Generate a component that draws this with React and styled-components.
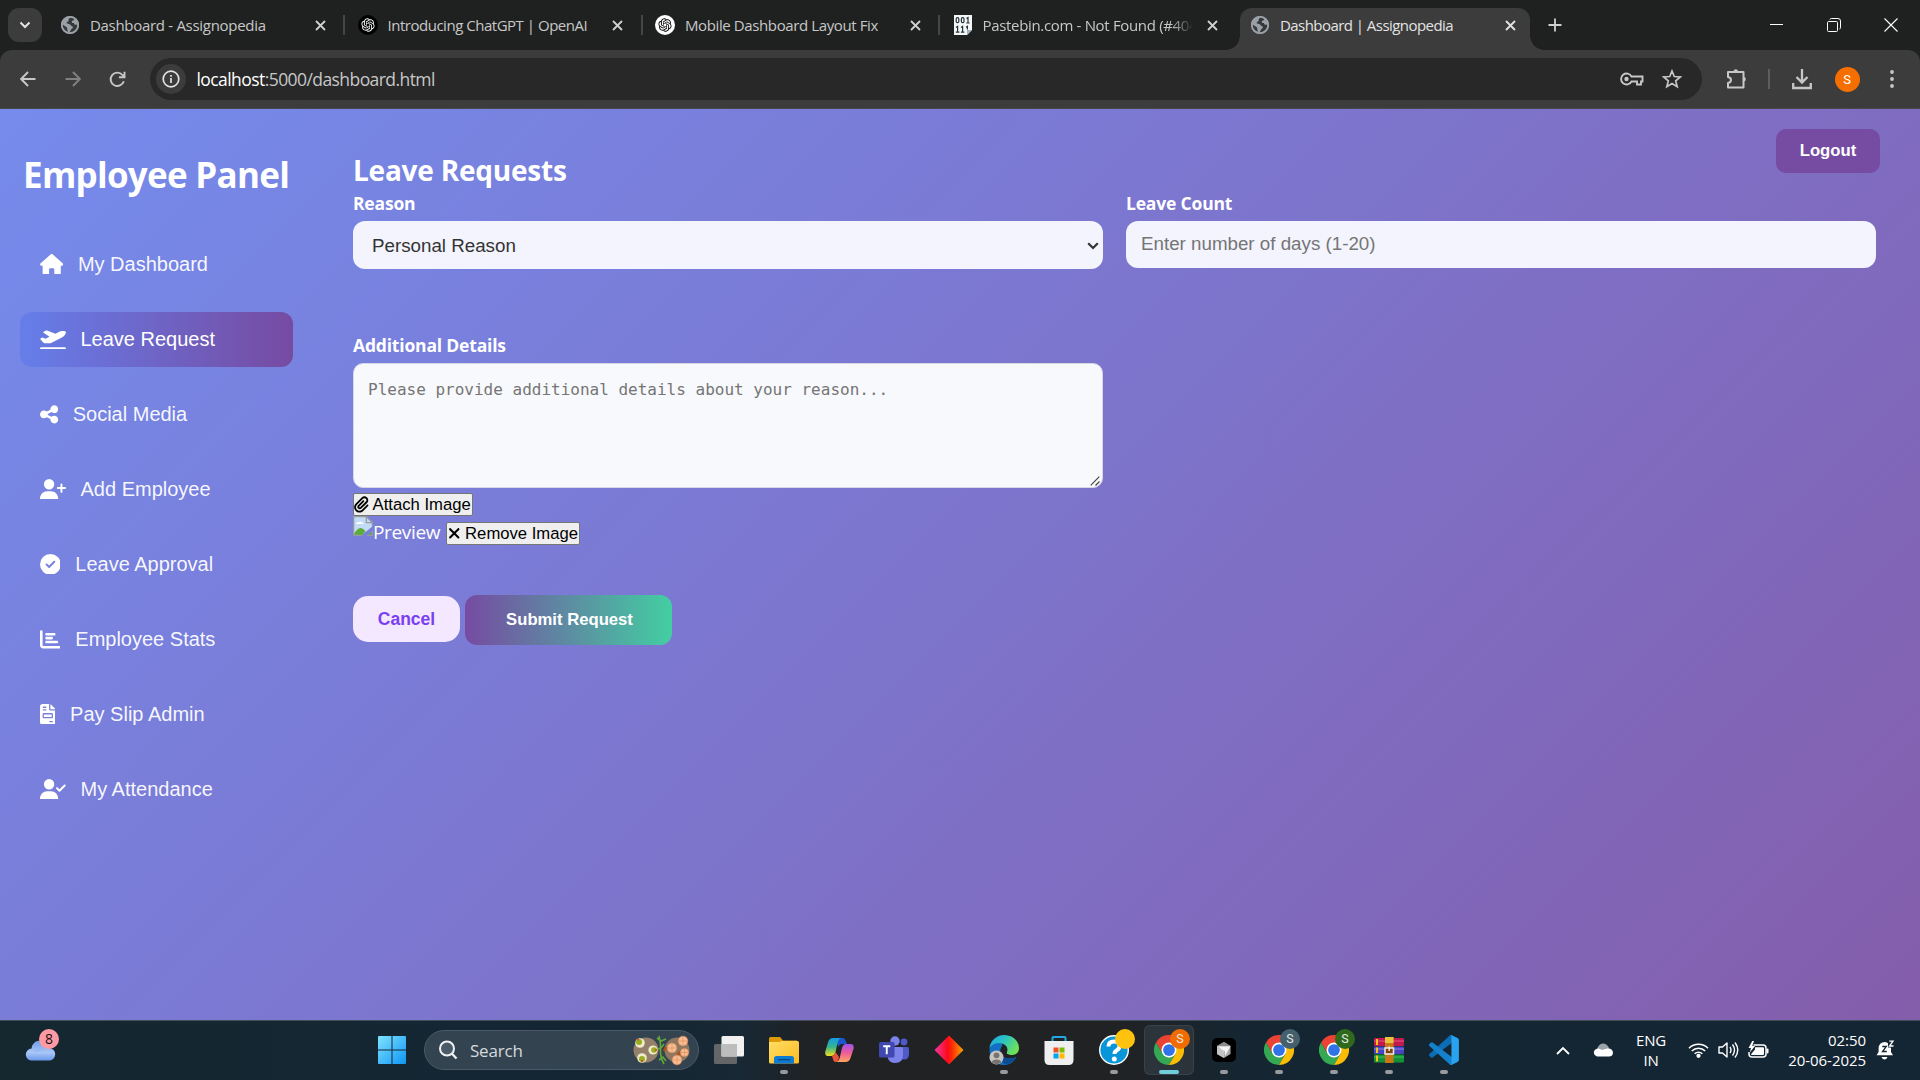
import React from "react";
import styled, { createGlobalStyle, css } from "styled-components";
import {
  FaHouse,
  FaPlaneDeparture,
  FaShareNodes,
  FaUserPlus,
  FaCircleCheck,
  FaChartBar,
  FaFileInvoice,
  FaUserCheck,
  FaPaperclip,
  FaXmark,
} from "react-icons/fa6";
import { RiOpenaiFill } from "react-icons/ri";

const ui = `"Open Sans", "Noto Sans", sans-serif`;
const arial = `"Liberation Sans", Arial, sans-serif`;

const GlobalStyle = createGlobalStyle`
  *, *::before, *::after { box-sizing: border-box; }
  html, body { margin: 0; height: 100%; overflow: hidden; }
  body { font-family: ${ui}; background: #1f2020; }
  svg { display: block; flex: none; }
`;

const Screen = styled.div`
  width: 1920px;
  height: 1080px;
  display: flex;
  flex-direction: column;
  overflow: hidden;
`;

/* ---------- browser chrome ---------- */

const TabStrip = styled.div`
  height: 50px;
  background: #1f2120;
  display: flex;
  align-items: flex-end;
  flex: none;
`;

const TabSearch = styled.div`
  width: 34px;
  height: 34px;
  margin: 0 11px 8px 8px;
  border-radius: 11px;
  background: #3c3c3c;
  display: grid;
  place-items: center;
  flex: none;
`;

const Tab = styled.div`
  position: relative;
  width: ${(p) => p.$w || 297.5}px;
  height: 42px;
  display: flex;
  align-items: center;
  padding: 0 ${(p) => (p.$w ? 18 : 19.5)}px 8px 7px;
  flex: none;
  ${(p) =>
    p.$active
      ? css`
          width: 290px;
          padding: 0 10px 8px 10px;
          background: #3c3c3c;
          border-radius: 12px 12px 0 0;
          &::before,
          &::after {
            content: "";
            position: absolute;
            bottom: 0;
            width: 14px;
            height: 14px;
          }
          &::before {
            left: -14px;
            background: radial-gradient(circle at 0 0, transparent 13.5px, #3c3c3c 14px);
          }
          &::after {
            right: -14px;
            background: radial-gradient(circle at 100% 0, transparent 13.5px, #3c3c3c 14px);
          }
        `
      : ""}
`;

const Favicon = styled.div`
  width: 20px;
  height: 20px;
  display: grid;
  place-items: center;
  margin-right: 10px;
  flex: none;
`;

const TabTitle = styled.div`
  flex: 1;
  min-width: 0;
  font-size: 15px;
  line-height: 20px;
  letter-spacing: ${(p) => p.$ls || 0}px;
  white-space: nowrap;
  overflow: hidden;
  color: ${(p) => (p.$active ? "#e3e3e3" : "#c7c7c7")};
  ${(p) => p.$fade && "mask-image: linear-gradient(90deg, #000 188px, transparent 210px);"}
`;

const TabClose = styled.div`
  width: 20px;
  height: 20px;
  display: grid;
  place-items: center;
  flex: none;
`;

const TabDivider = styled.div`
  width: 2px;
  height: 20px;
  margin-left: 13px;
  margin-right: -14px;
  background: #454746;
  flex: none;
`;

const NewTab = styled.div`
  width: 30px;
  height: 42px;
  margin-left: 10px;
  padding-bottom: 8px;
  display: grid;
  place-items: center;
`;

const WindowButtons = styled.div`
  margin-left: auto;
  margin-right: 1px;
  height: 50px;
  display: flex;
`;

const WindowButton = styled.div`
  width: 57px;
  height: 50px;
  display: grid;
  place-items: center;
`;

const ToolbarWrap = styled.div`
  height: 59px;
  background: #1f2120;
  flex: none;
`;

const Toolbar = styled.div`
  height: 59px;
  background: #3c3c3c;
  border-bottom: 1px solid #48484a;
  border-radius: 12px 12px 0 0;
  display: flex;
  align-items: center;
  padding-left: 6px;
`;

const ToolButton = styled.div`
  width: ${(p) => p.$w || 44.5}px;
  height: 42px;
  display: grid;
  place-items: center;
  flex: none;
`;

const AddressBar = styled.div`
  width: 1552px;
  height: 42px;
  margin: 0 24px 0 10px;
  border-radius: 21px;
  background: #282828;
  display: flex;
  align-items: center;
  padding: 0 10px 0 6px;
  flex: none;
`;

const SiteInfo = styled.div`
  width: 30px;
  height: 30px;
  border-radius: 50%;
  background: #3c3c3c;
  display: grid;
  place-items: center;
  margin-right: 11px;
`;

const Url = styled.div`
  flex: 1;
  font-size: 17.5px;
  line-height: 24px;
  letter-spacing: -0.57px;
  color: #c7c7c7;
  span { color: #fff; }
`;

const ToolDivider = styled.div`
  width: 2px;
  height: 20px;
  margin: 0 10px 0 20px;
  background: #5e5e5e;
`;

const Profile = styled.div`
  width: 25px;
  height: 25px;
  border-radius: 50%;
  background: #f56f00;
  color: #fff;
  font: 13px/25px Roboto, sans-serif;
  text-align: center;
`;

/* ---------- web page ---------- */

const Page = styled.div`
  flex: 1;
  min-height: 0;
  display: flex;
  background: linear-gradient(rgba(255, 255, 255, 0.1), rgba(255, 255, 255, 0.1)),
    linear-gradient(135deg, #667eea 0%, #764ba2 100%);
  color: #fff;
`;

const Sidebar = styled.aside`
  width: 313px;
  padding: 40px 20px 0;
  flex: none;
`;

const PanelTitle = styled.h1`
  margin: 0 0 36px 3px;
  font: 700 35px/52px ${ui};
  letter-spacing: -0.72px;
  white-space: nowrap;
`;

const Menu = styled.nav`
  display: flex;
  flex-direction: column;
  gap: 20px;
`;

const MenuItem = styled.a`
  height: 55px;
  display: flex;
  align-items: center;
  gap: 15px;
  padding: 0 20px 1px 19.5px;
  border-radius: 12px;
  font: 20px/24px ${arial};
  color: ${(p) => (p.$active ? "#fff" : "rgba(255,255,255,.95)")};
  background: ${(p) => (p.$active ? "linear-gradient(90deg, #667eea, #764ba2)" : "none")};
  svg {
    height: 20.8px;
    width: ${(p) => p.$iconWidth}px;
    color: #fff;
  }
`;

const Main = styled.main`
  flex: 1;
  padding: 20px 40px 0;
  display: flex;
  flex-direction: column;
`;

const LogoutButton = styled.button`
  align-self: flex-end;
  width: 104px;
  height: 44px;
  border: 0;
  border-radius: 10px;
  background: #764ba2;
  color: #fff;
  font: 700 16.7px/20px ${arial};
  padding: 0;
`;

const Content = styled.section`
  width: 1523px;
  margin-top: -22px;
`;

const Heading = styled.h2`
  margin: 0;
  font: 700 28px/38px ${ui};
  letter-spacing: -0.22px;
`;

const FieldRow = styled.div`
  display: grid;
  grid-template-columns: 750px 750px;
  column-gap: 23px;
  height: 142px;
  align-items: start;
`;

const Field = styled.div`
  display: flex;
  flex-direction: column;
  width: 750px;
`;

const FieldLabel = styled.label`
  font: 700 17.5px/28px ${ui};
  letter-spacing: -0.18px;
  margin-bottom: 4px;
  white-space: nowrap;
`;

const ControlWrap = styled.div`
  position: relative;
  display: flex;
`;

const ControlMark = styled.span`
  position: absolute;
  right: ${(p) => p.$right}px;
  bottom: ${(p) => p.$bottom}px;
  pointer-events: none;
`;

const Select = styled.select`
  width: 750px;
  height: 48px;
  border: 0;
  border-radius: 12px;
  padding: 1px 19px 0;
  background: #f3f4fd;
  color: #333;
  font: 18.75px/24px ${arial};
  appearance: none;
`;

const NumberInput = styled.input`
  width: 750px;
  height: 47px;
  border: 0;
  border-radius: 12px;
  padding: 0 15px 1px;
  background: #f3f4fd;
  font: 18.75px/24px ${arial};
  &::placeholder { color: #757575; }
`;

const Details = styled.textarea`
  width: 750px;
  height: 125px;
  border: 1px solid #d5d7e2;
  border-radius: 10px;
  background: #f8f9fc;
  padding: 15px 15px 15px 14px;
  font: 16px/22px "DejaVu Sans Mono", monospace;
  resize: none;
  display: block;
  &::placeholder { color: #757575; }
`;

const PlainButton = styled.button`
  height: 23px;
  width: ${(p) => p.$w}px;
  display: inline-flex;
  align-items: center;
  padding: 0;
  padding-left: ${(p) => p.$pl || 0}px;
  gap: ${(p) => p.$gap}px;
  border: 1px solid #767676;
  border-radius: 2px;
  background: #efefef;
  color: #000;
  font: 16.67px/20px ${arial};
  white-space: nowrap;
  svg { height: 16.67px; width: ${(p) => p.$iconWidth}px; }
`;

const AttachRow = styled.div`
  display: flex;
  margin-top: 5px;
`;

const PreviewRow = styled.div`
  display: flex;
  align-items: flex-start;
  height: 32px;
  ${PlainButton} { margin-top: 6px; }
`;

const PreviewAlt = styled.span`
  width: 73px;
  padding-top: 3px;
  font: 500 19px/26px ${ui};
  letter-spacing: -0.35px;
`;

const Actions = styled.div`
  display: flex;
  align-items: flex-start;
  gap: 5px;
  margin-top: 47px;
`;

const CancelButton = styled.button`
  width: 107px;
  height: 46px;
  margin: 1px 0 0;
  border: 0;
  border-radius: 15px;
  background: #f3e8ff;
  color: #7b3ff2;
  font: 700 17.5px/20px ${arial};
  padding: 0;
`;

const SubmitButton = styled.button`
  width: 207px;
  height: 50px;
  margin: 0;
  border: 0;
  border-radius: 12px;
  background: linear-gradient(90deg, #764ba2, #43cea2);
  color: #fff;
  font: 700 16.67px/20px ${arial};
  padding: 0 0 1px 2px;
`;

/* ---------- taskbar ---------- */

const Taskbar = styled.footer`
  height: 60px;
  flex: none;
  border-top: 1px solid #42505c;
  padding-bottom: 1px;
  background: linear-gradient(90deg, #152830 0, #142634 600px, #182834 740px, #202224 810px, #202224 1120px, #152632 1240px, #142634 100%);
  display: flex;
  align-items: center;
  color: #fff;
`;

const Weather = styled.div`
  position: relative;
  width: 364.5px;
  height: 58px;
  padding: 19px 0 0 25px;
`;

const CountBadge = styled.div`
  position: absolute;
  left: 39px;
  top: 8px;
  width: 20px;
  height: 20px;
  border-radius: 50%;
  background: #ff99a4;
  color: #111;
  font: 14px/20px ${ui};
  text-align: center;
`;

const TaskSlot = styled.div`
  position: relative;
  width: 50px;
  height: 50px;
  margin: 0 2.5px;
  border-radius: 6px;
  display: grid;
  place-items: center;
  flex: none;
  ${(p) =>
    p.$active &&
    css`
      background: #2b333b;
      box-shadow: inset 0 0 0 1px #39424a;
    `}
  &::after {
    content: "";
    display: ${(p) => (p.$running || p.$active ? "block" : "none")};
    position: absolute;
    bottom: 1px;
    left: ${(p) => (p.$active ? 15 : 21)}px;
    width: ${(p) => (p.$active ? 20 : 8)}px;
    height: 4px;
    border-radius: 2px;
    background: ${(p) => (p.$active ? "#6fd0dc" : "#969b9f")};
  }
`;

const SlotBadge = styled.div`
  position: absolute;
  left: 26px;
  top: 4px;
  width: 20px;
  height: 20px;
  border-radius: 50%;
  background: ${(p) => p.$color};
  color: #e8e8e8;
  font: 12.5px/20px Roboto, sans-serif;
  text-align: center;
`;

const SearchPill = styled.div`
  width: 275px;
  height: 40px;
  margin: 0 2.5px 0 4.5px;
  border-radius: 20px;
  border: 1px solid #4a5965;
  background: #344350;
  display: flex;
  align-items: center;
  padding: 0 6px 0 13px;
  font: 17px/22px ${ui};
  letter-spacing: -0.2px;
  color: #d4dade;
  flex: none;
  span { flex: 1; margin-left: 12px; padding-top: 1px; }
`;

const Tray = styled.div`
  margin-left: auto;
  height: 58px;
  display: flex;
  align-items: center;
`;

const TrayItem = styled.div`
  width: ${(p) => p.$w}px;
  display: grid;
  justify-items: center;
  flex: none;
`;

const TrayText = styled.div`
  width: ${(p) => p.$w}px;
  padding-bottom: 1px;
  text-align: ${(p) => p.$align || "center"};
  font: 15px/20px ${ui};
  letter-spacing: ${(p) => p.$ls || 0}px;
  white-space: pre;
  flex: none;
`;

/* ---------- drawings ---------- */

const Stroke = ({ w = 20, h = w, vb = `0 0 ${w} ${h}`, d, c = "#c7c7c7", sw = 2, ...r }) => (
  <svg width={w} height={h} viewBox={vb} fill="none" stroke={c} strokeWidth={sw} {...r}>
    <path d={d} />
  </svg>
);

const Globe = () => (
  <svg width="18" height="18" viewBox="0 0 18 18">
    <circle cx="9" cy="9" r="9" fill="#9aa0a6" />
    <path
      fill="#303335"
      d="M10 1.8 C8.5 2 7.4 3 7.6 4.4 C7.8 5.6 6 5.4 5.6 6.8 C5.4 8.2 7.4 8 8.6 8.3 C10 8.7 9.6 10 11 10.2 C12.6 10.5 12 12.2 10.8 12.8 C9.8 13.4 9.8 15 8.4 16.3 L6.8 16 C7 14.4 6 13.6 6.2 12.2 C6.3 11 3.6 10.4 1.7 8.6 C1.5 12.5 4.5 16.5 9 16.4 C13.3 16.2 16.4 13 16.4 9 L15.2 8.4 C13.6 9.2 12.8 8 13 7 C11.4 7.4 10.6 6.6 10.8 5.4 C11 4.2 13 4.6 13.4 3.2 C12.4 2.2 11.2 1.8 10 1.8 Z"
      opacity=".95"
    />
    <circle cx="9" cy="9" r="8.2" fill="none" stroke="#9aa0a6" strokeWidth="1.7" />
  </svg>
);

const GptBadge = styled.span`
  width: 20px;
  height: 20px;
  border-radius: 50%;
  display: grid;
  place-items: center;
  background: ${(p) => p.$bg};
  color: ${(p) => p.$fg};
  font-size: 16px;
`;

const GptMark = ({ bg, fg }) => (
  <GptBadge $bg={bg} $fg={fg}>
    <RiOpenaiFill />
  </GptBadge>
);

const PasteMark = () => (
  <svg width="18" height="20" viewBox="0 0 18 20">
    <path d="M0 0H18V15L13 20H0Z" fill="#f4f6f7" />
    <path d="M13 20V15H18Z" fill="#9fb0bb" />
    <g fill="none" stroke="#26323a" strokeWidth="1.2">
      <rect x="2.2" y="2.7" width="2.6" height="5" rx="1.2" />
      <rect x="7.4" y="2.7" width="2.6" height="5" rx="1.2" />
      <path d="M12.5 3.6 L14 2.6V8 M12.3 8H15.6 M2 12.6 L3.6 11.5V17 M1.8 17.2H5.4 M7 12.6 L8.6 11.5V17 M6.9 17.2H10.4 M12 12.2L13.4 11.4V14.5" />
    </g>
  </svg>
);

const CloseX = ({ c = "#d0d0d0" }) => <Stroke w={11} d="M1 1L10 10M10 1L1 10" c={c} sw={1.8} />;

const ChromeLogo = () => (
  <svg width="30" height="30" viewBox="0 0 48 48">
    <path fill="#ea4335" d="M24 12H44.8A24 24 0 0 0 3.2 12L13.6 30Z" />
    <path fill="#34a853" d="M13.6 30L3.2 12A24 24 0 0 0 24 48L34.4 30Z" />
    <path fill="#fbbc04" d="M34.4 30L24 48A24 24 0 0 0 44.8 12H24Z" />
    <circle cx="24" cy="24" r="12" fill="#fff" />
    <circle cx="24" cy="24" r="9.4" fill="#2f73e8" />
  </svg>
);

const WindowsLogo = () => (
  <svg width="30" height="30" viewBox="0 0 30 30">
    <defs>
      <linearGradient id="win" x1="0" y1="0" x2="1" y2="1">
        <stop offset="0" stopColor="#7fe3ff" />
        <stop offset="1" stopColor="#0f95f5" />
      </linearGradient>
    </defs>
    <path fill="url(#win)" d="M2 1H14.5V14.5H1V2Q1 1 2 1ZM15.5 1H28Q29 1 29 2V14.5H15.5ZM1 15.5H14.5V29H2Q1 29 1 28ZM15.5 15.5H29V28Q29 29 28 29H15.5Z" />
  </svg>
);

const WeatherCloud = () => (
  <svg width="32" height="21" viewBox="0 0 32 21">
    <defs>
      <linearGradient id="wc" x1="0" y1="0" x2="0" y2="1">
        <stop offset="0" stopColor="#6f9be8" />
        <stop offset=".6" stopColor="#a9c6f7" />
        <stop offset="1" stopColor="#6b9aea" />
      </linearGradient>
    </defs>
    <path fill="url(#wc)" d="M7 20.5a6 6 0 0 1-.4-12C7 4 10.500 .5 15.500 .5c4.500 0 8 3 8.700 7.500A6.300 6.300 0 0 1 25 20.500Z" />
    <path fill="#8fb4f2" opacity=".6" d="M9 12c2-3 6-4 9-2-4 0-6 2-9 2Z" />
  </svg>
);

const FoodPlates = () => (
  <svg width="60" height="40" viewBox="0 0 60 40">
    <circle cx="14" cy="20" r="12.500" fill="#94806a" />
    <circle cx="45" cy="20" r="12.500" fill="#8d785f" />
    <g fill="#eceacb">
      <circle cx="8" cy="13" r="4.800" />
      <circle cx="21" cy="20" r="4.600" />
      <circle cx="10" cy="28" r="4.800" />
    </g>
    <g fill="#9aac22">
      <circle cx="7" cy="12" r="3" />
      <circle cx="22" cy="20" r="2.800" />
      <circle cx="10" cy="29" r="3" />
    </g>
    <g fill="#d8432b">
      <circle cx="6" cy="9.500" r="1" />
      <circle cx="24" cy="20" r="1" />
      <circle cx="10" cy="31" r="1" />
    </g>
    <path d="M27 6Q29 13 28.500 20T32 34M25 8L29 11L34 9M26 19L29 18L32 14M27 30L31 27L34 31" stroke="#5fa83a" strokeWidth="1.600" fill="none" />
    <path d="M34 17l-2 4M48 22l-3 5" stroke="#b04f1a" strokeWidth="2.500" />
    <g fill="#f7bd93" stroke="#e08a55" strokeWidth=".6">
      <circle cx="40" cy="18" r="4.800" />
      <circle cx="51" cy="11" r="4.800" />
      <circle cx="45" cy="30" r="4.800" />
      <circle cx="52.500" cy="22.500" r="4" />
      <path d="M36 18H44M40 14V22M47 11H55M51 7V15M41 30H49M45 26V34M49 22.500H56M52.500 19V26" fill="none" />
    </g>
  </svg>
);

const TaskView = () => (
  <svg width="30" height="28" viewBox="0 0 30 28">
    <rect x="0" y="8" width="23" height="20" rx="1.500" fill="#646566" />
    <rect x="7.500" y="0" width="22.500" height="20.500" rx="1.500" fill="#f1f1f1" />
    <rect x="7.500" y="8" width="15.500" height="12.500" fill="#bdbdbd" />
  </svg>
);

const Explorer = () => (
  <svg width="30" height="28" viewBox="0 0 30 28">
    <defs>
      <linearGradient id="fold" x1="0" y1="0" x2="1" y2="1">
        <stop offset="0" stopColor="#ffdd66" />
        <stop offset="1" stopColor="#fcbc20" />
      </linearGradient>
    </defs>
    <path fill="#dd9a06" d="M1.500 1H11L14 4.500H28V10H0V2.500Q0 1 1.500 1Z" />
    <path fill="url(#fold)" d="M0 6H10L13 5H28.500Q30 5 30 6.500V26Q30 27.500 28.500 27.500H1.500Q0 27.500 0 26Z" />
    <path fill="#0f7bd0" d="M5 27.500V22.500Q5 20 7.500 20H22.500Q25 20 25 22.500V27.500Z" />
    <path stroke="#064a86" strokeWidth="1.300" d="M9 23.700H21" />
  </svg>
);

const Copilot = () => (
  <svg width="29" height="26" viewBox="0 0 29 26">
    <defs>
      <linearGradient id="cpa" x1="0" y1="0" x2="0" y2="1">
        <stop offset="0" stopColor="#159be8" />
        <stop offset=".5" stopColor="#35b58c" />
        <stop offset="1" stopColor="#f4dc1c" />
      </linearGradient>
      <linearGradient id="cpb" x1="0" y1="0" x2="0" y2="1">
        <stop offset="0" stopColor="#a052ee" />
        <stop offset=".5" stopColor="#ee5c97" />
        <stop offset="1" stopColor="#ffa65a" />
      </linearGradient>
    </defs>
    <path fill="#1b56cc" d="M10 1H18Q20 1 20.800 4L22 7H17Q14.500 7 13.600 10Z" />
    <path fill="url(#cpa)" d="M8 1H16Q13.500 2 12.800 5L10.500 15Q9.500 19 6 19H3.500Q-.5 19 .3 14.500L3.300 4.500Q4.500 1 8 1Z" />
    <path fill="#e9563d" d="M7 19Q9.800 18.600 10.500 15L14 20Q13.500 25 10.500 25Q8.500 25 8 22Z" />
    <path fill="url(#cpb)" d="M21 7H25.500Q29.500 7 28.500 12L25.500 21Q24.300 25 20.500 25H11Q13.800 24.500 14.700 21L17 11Q18 7 21 7Z" />
  </svg>
);

const Teams = () => (
  <svg width="30" height="28" viewBox="0 0 30 28">
    <circle cx="25" cy="6" r="3.400" fill="#5059c9" />
    <circle cx="16" cy="5" r="4.700" fill="#7b83eb" />
    <path d="M21 11H28.500Q30 11 30 12.500V18Q30 23.500 25 23.500Q22 23.500 20 21Z" fill="#5059c9" />
    <path d="M9 11H22.500Q24 11 24 12.500V19Q24 27 16 27Q10 27 8.500 21Z" fill="#7b83eb" />
    <rect x="0" y="6" width="15.500" height="15.500" rx="1.500" fill="#4049b0" />
    <path d="M4.200 10.300H11.300M7.750 10.300V18.200" stroke="#fff" strokeWidth="1.900" />
  </svg>
);

const Diamond = () => (
  <svg width="30" height="30" viewBox="0 0 30 30">
    <defs>
      <linearGradient id="dia">
        <stop offset="0" stopColor="#f238a8" />
        <stop offset=".45" stopColor="#fb0a1a" />
        <stop offset=".6" stopColor="#fb2a08" />
        <stop offset="1" stopColor="#f6a900" />
      </linearGradient>
    </defs>
    <path d="M15 .5L29.500 15L15 29.500L.5 15Z" fill="url(#dia)" />
  </svg>
);

const Edge = () => (
  <svg width="30" height="30" viewBox="0 0 30 30">
    <defs>
      <linearGradient id="ea" x1="0" y1="0" x2="1" y2=".5">
        <stop offset="0" stopColor="#1ba4e4" />
        <stop offset=".5" stopColor="#2cc3c4" />
        <stop offset="1" stopColor="#6ee05a" />
      </linearGradient>
    </defs>
    <path fill="#1470c4" d="M.5 14C2 8 8 6 12 8C16 10 10 12 11.500 18C13 23 20 25 27.500 22C25 27 20.500 30 15 30C6 30 0 23 .5 14Z" />
    <path fill="#0b4c92" d="M11 17C12 23 20 25 27.500 22C25 26.500 21 29 17 29.500C12 28 9.500 22 11 17Z" />
    <path fill="url(#ea)" d="M.4 13C1.500 5.500 7.500 0 15 0C23.500 0 30 6 30 13C30 18 26.500 20 23 20C19 20 17 18.800 17.500 17.500C18.500 16.500 19 14 17.500 11.500C14 6 4 7 .4 13Z" />
    <path fill="#202224" d="M12 16.500Q12.500 12.500 16 11.500Q18.800 13.500 17.600 17.200Q17 19.300 21.500 20L27 20.500Q19 23.500 15 21Q12 19.500 12 16.500Z" />
    <circle cx="7.500" cy="22.500" r="7" fill="#c7c5c2" />
    <circle cx="7.500" cy="20.300" r="2.900" fill="#77736f" />
    <path d="M2.800 27.500Q3 24.600 7.500 24.600T12.200 27.500Q7.500 31 2.800 27.500Z" fill="#77736f" />
  </svg>
);

const Store = () => (
  <svg width="30" height="30" viewBox="0 0 30 30">
    <path d="M8.500 7V3Q8.500 2 9.500 2H20.500Q21.500 2 21.500 3V7" stroke="#21a7e4" strokeWidth="2" fill="none" />
    <path d="M.5 6H29.500V25Q29.500 30 24.500 30H5.500Q.5 30 .5 25Z" fill="#efefef" />
    <path fill="#f25022" d="M9.500 12.500h5v5h-5z" />
    <path fill="#7fba00" d="M15.500 12.500h5v5h-5z" />
    <path fill="#00a4ef" d="M9.500 18.500h5v5h-5z" />
    <path fill="#ffb900" d="M15.500 18.500h5v5h-5z" />
  </svg>
);

const Help = () => (
  <svg width="30" height="30" viewBox="0 0 30 30">
    <circle cx="15" cy="15" r="14.300" fill="#0996d8" stroke="#fff" strokeWidth="1.400" />
    <path d="M9.500 11.500Q9.500 6.500 15 6.500T20.500 11Q20.500 14 17.500 15.500Q15.500 16.500 15.500 19" fill="none" stroke="#fff" strokeWidth="4" />
    <circle cx="15.300" cy="24" r="2.500" fill="#fff" />
  </svg>
);

const CursorApp = () => (
  <svg width="24" height="24" viewBox="0 0 24 24">
    <rect width="24" height="24" rx="5" fill="#000" />
    <path d="M12 4L18.500 8V16L12 20L5 16V8Z" fill="#a9a9a9" />
    <path d="M5 8L12 4L18.500 8L12 9.500Z" fill="#8a8a8a" />
    <path d="M5 8L12 12V20L5 16Z" fill="#c4c4c4" />
    <path d="M6 8.300H18.500L13 18L12.800 13L11 12.500Z" fill="#f4f4f4" />
  </svg>
);

const WinRar = () => (
  <svg width="30" height="26" viewBox="0 0 30 26">
    <rect y="1" width="30" height="8" rx="1" fill="#c21a4e" />
    <rect y="9.500" width="30" height="7.500" rx="1" fill="#4a44c4" />
    <rect y="17.500" width="30" height="8" rx="1" fill="#129137" />
    <path d="M0 4H30" stroke="#e75580" strokeWidth="1" />
    <path d="M0 12H30" stroke="#8683ea" strokeWidth="1" />
    <path d="M0 20H30" stroke="#40c463" strokeWidth="1" />
    <path d="M3 2V8M3 10.500V16M3 18.500V24.500" stroke="#f5c518" strokeWidth="2" />
    <rect x="11" y="0" width="8.500" height="26" fill="#c97818" />
    <rect x="11" y="0" width="8.500" height="6" fill="#e9c23c" />
    <rect x="11" y="11" width="8.500" height="6" fill="#7f4310" stroke="#e9e4da" strokeWidth="1.600" />
    <path d="M15.200 9.500V14" stroke="#eee" strokeWidth="1.400" />
  </svg>
);

const VsCode = () => (
  <svg width="30" height="30" viewBox="0 0 100 100">
    <path fill="#0b6db5" d="M96 11L75.500 1A6.200 6.200 0 0 0 68.500 2.200L1.300 63.500A4.200 4.200 0 0 0 1.300 69.600L6.800 74.600A4.200 4.200 0 0 0 12.100 74.900L93.100 13.400C95.800 11.400 99.700 13.300 99.700 16.700V16.400A6.200 6.200 0 0 0 96 11Z" />
    <path fill="#1580cc" d="M96 89L75.500 99A6.200 6.200 0 0 1 68.500 97.800L1.300 36.500A4.200 4.200 0 0 1 1.300 30.400L6.800 25.400A4.200 4.200 0 0 1 12.100 25.100L93.100 86.600C95.800 88.600 99.700 86.700 99.700 83.300V83.600A6.200 6.200 0 0 1 96 89Z" />
    <path fill="#2aa3ef" d="M75.500 99A6.200 6.200 0 0 1 68.500 97.800C70.800 100 74.800 98.400 74.800 95.200V4.800C74.800 1.600 70.800 0 68.500 2.200A6.200 6.200 0 0 1 75.500 1L96 10.800A6.200 6.200 0 0 1 99.600 16.400V83.600A6.200 6.200 0 0 1 96 89.200Z" />
  </svg>
);

const BrokenImage = () => (
  <svg width="20" height="20" viewBox="0 0 20 20">
    <path d="M.7 .7H13.500L19.300 6.500V10.500L8.500 19.300H.7Z" fill="#c3dcf6" />
    <path d="M3 7.500q1-2 2.500-1q2-2 3.500 0q1.500 0 1.500 1.500h-7.500z" fill="#fff" />
    <path d="M1 18.500Q4 11.500 8 12Q11 12.500 12.500 15.500L9 19.300H1Z" fill="#5bac39" />
    <path d="M15 19.300L19.300 15.300V19.300Z" fill="#5bac39" />
    <path d="M.7 19.300V.7H13.500L19.300 6.500V10M13.300 1V6.700H19M.7 19.300H8.500M14 19.300H19.300V15" fill="none" stroke="#969ba2" strokeWidth="1.300" />
  </svg>
);

const Wifi = () => (
  <svg width="21" height="16" viewBox="0 0 21 16" fill="none" stroke="#fff" strokeWidth="1.500">
    <path d="M1 6.200A13.400 13.400 0 0 1 20 6.200M3.800 9A9.500 9.500 0 0 1 17.200 9M6.600 11.800A5.600 5.600 0 0 1 14.400 11.800" />
    <circle cx="10.500" cy="13.800" r="1.400" fill="#fff" />
  </svg>
);

const Volume = () => (
  <svg width="21" height="18" viewBox="0 0 21 18" fill="none" stroke="#fff" strokeWidth="1.400" strokeLinejoin="round">
    <path d="M1 6H4.500L9 2V16L4.500 12H1ZM12 6Q14 9 12 12M14.500 3.500Q18.500 9 14.500 14.500M17 1.500Q22.500 9 17 16.500" />
  </svg>
);

const Battery = () => (
  <svg width="21" height="18" viewBox="0 0 21 18">
    <path d="M5.500 4H15Q18 4 18 7V13Q18 16 15 16H4Q1 16 1 13V11" fill="none" stroke="#fff" strokeWidth="1.500" />
    <path d="M7 6.200H15Q16 6.200 16 7V13Q16 14 15 14H4Q3 14 3 13.200L7 8.500Z" fill="#fff" />
    <rect x="18.500" y="7.500" width="2" height="5" rx="1" fill="#fff" />
    <path d="M4.300 0L.5 7H3L1.800 11.500L7 5H4.200L6 0Z" fill="#fff" />
  </svg>
);

const Bell = () => (
  <svg width="19" height="20" viewBox="0 0 19 20">
    <path d="M9 2Q2.800 2 2.600 8.500V12L.6 15.300H17L15 12V8Q14 3 9 2Z" fill="#fff" />
    <path d="M5.500 17H11.500Q10.500 19.500 8.500 19.500T5.500 17Z" fill="#fff" />
    <rect x="12" y="0" width="7" height="7.500" fill="#142634" />
    <path d="M13.300 1.200H17L13.500 6H17.500" fill="none" stroke="#fff" strokeWidth="1.300" />
    <path d="M6.300 6.500H10.300L6.500 11.500H10.800" fill="none" stroke="#142634" strokeWidth="1.300" />
  </svg>
);

/* ---------- data ---------- */

const tabs = [
  { title: "Dashboard - Assignopedia", icon: <Globe />, ls: -0.3 },
  { title: "Introducing ChatGPT | OpenAI", icon: <GptMark bg="#000" fg="#fff" />, ls: -0.48 },
  { title: "Mobile Dashboard Layout Fix", icon: <GptMark bg="#fff" fg="#000" />, ls: -0.39 },
  { title: "Pastebin.com - Not Found (#404)", icon: <PasteMark />, ls: -0.33, fade: true, last: true },
];

const menu = [
  { label: "My Dashboard", icon: FaHouse, iconWidth: 23.4 },
  { label: "Leave Request", icon: FaPlaneDeparture, iconWidth: 26, active: true },
  { label: "Social Media", icon: FaShareNodes, iconWidth: 18.2 },
  { label: "Add Employee", icon: FaUserPlus, iconWidth: 26 },
  { label: "Leave Approval", icon: FaCircleCheck, iconWidth: 20.8 },
  { label: "Employee Stats", icon: FaChartBar, iconWidth: 20.8 },
  { label: "Pay Slip Admin", icon: FaFileInvoice, iconWidth: 15.6 },
  { label: "My Attendance", icon: FaUserCheck, iconWidth: 26 },
];

const apps = [
  { icon: <TaskView /> },
  { icon: <Explorer />, running: true },
  { icon: <Copilot /> },
  { icon: <Teams /> },
  { icon: <Diamond /> },
  { icon: <Edge />, running: true },
  { icon: <Store /> },
  { icon: <Help />, running: true, badge: "#ffc20e" },
  { icon: <ChromeLogo />, active: true, badge: "#f06c00", letter: "S" },
  { icon: <CursorApp />, running: true },
  { icon: <ChromeLogo />, running: true, badge: "#45606d", letter: "S" },
  { icon: <ChromeLogo />, running: true, badge: "#2e6a1c", letter: "S" },
  { icon: <WinRar />, running: true },
  { icon: <VsCode />, running: true },
];

export default function App() {
  return (
    <>
      <GlobalStyle />
      <Screen>
        <TabStrip>
          <TabSearch>
            <Stroke w={12} h={8} d="M1.500 1.500L6 6L10.500 1.500" c="#e3e3e3" sw={2} />
          </TabSearch>
          {tabs.map((t) => (
            <Tab key={t.title} $w={t.last ? 294.5 : undefined}>
              <Favicon>{t.icon}</Favicon>
              <TabTitle $ls={t.ls} $fade={t.fade}>{t.title}</TabTitle>
              <TabClose><CloseX /></TabClose>
              {!t.last && <TabDivider />}
            </Tab>
          ))}
          <Tab $active>
            <Favicon><Globe /></Favicon>
            <TabTitle $active $ls={-0.55}>Dashboard | Assignopedia</TabTitle>
            <TabClose><CloseX c="#e3e3e3" /></TabClose>
          </Tab>
          <NewTab><Stroke w={14} d="M7 .5V13.500M.5 7H13.500" c="#d0d0d0" sw={1.800} /></NewTab>
          <WindowButtons>
            <WindowButton><Stroke w={13} h={3} d="M0 .5H13" c="#fff" sw={1} /></WindowButton>
            <WindowButton>
              <Stroke w={14} d="M.5 4.500Q.5 3.500 1.500 3.500H9.500Q10.500 3.500 10.500 4.500V12.500Q10.500 13.500 9.500 13.500H1.500Q.5 13.500 .5 12.500ZM3 1.500Q3 .5 4.500 .5H11Q13.500 .5 13.500 3V9.500Q13.500 11 12.500 11" c="#fff" sw={1} />
            </WindowButton>
            <WindowButton><Stroke w={14} d="M.5 .5L13.500 13.500M13.500 .5L.5 13.500" c="#fff" sw={1.100} /></WindowButton>
          </WindowButtons>
        </TabStrip>

        <ToolbarWrap>
          <Toolbar>
            <ToolButton><Stroke w={16} d="M15.500 8H1.500M8 1L1.200 8L8 15" sw={1.900} /></ToolButton>
            <ToolButton><Stroke w={16} d="M.5 8H14.500M8 1L14.800 8L8 15" c="#808080" sw={1.900} /></ToolButton>
            <ToolButton>
              <Stroke w={17} d="M14.800 10.200A6.700 6.700 0 1 1 13.500 4L15.300 6M15.500 .8V6.300H10" sw={1.900} />
            </ToolButton>
            <AddressBar>
              <SiteInfo>
                <svg width="18" height="18" viewBox="0 0 18 18" fill="none" stroke="#e3e3e3" strokeWidth="1.700">
                  <circle cx="9" cy="9" r="7.800" />
                  <path d="M9 8V13M9 5V6.700" />
                </svg>
              </SiteInfo>
              <Url><span>localhost</span>:5000/dashboard.html</Url>
              <ToolButton $w={40}>
                <svg width="24" height="14" viewBox="0 0 24 14" fill="none" stroke="#c7c7c7" strokeWidth="1.900">
                  <path d="M11.500 4.500A5.500 5.500 0 1 0 11.500 9.500H17V12.500H21V9.500H22.500V4.500Z" />
                  <circle cx="6.500" cy="7" r="2.200" fill="#c7c7c7" stroke="none" />
                </svg>
              </ToolButton>
              <ToolButton $w={40}>
                <Stroke w={20} d="M10 2L12.300 7.500L18.300 8L13.700 11.900L15.200 17.800L10 14.600L4.800 17.800L6.300 11.900L1.700 8L7.700 7.500Z" sw={1.700} />
              </ToolButton>
            </AddressBar>
            <svg width="22" height="22" viewBox="0 0 22 22" fill="none" stroke="#c7c7c7" strokeWidth="2" strokeLinejoin="round" overflow="visible">
              <path d="M2 4H17.500V19.500H2V15Q5 14.500 5 12T2 9Z" />
              <path d="M7.500 3.500A2.300 2.300 0 0 1 12 3.500ZM18 9.500A2.300 2.300 0 0 1 18 14Z" fill="#c7c7c7" stroke="none" transform="translate(0 -.5)" />
            </svg>
            <ToolDivider />
            <ToolButton>
              <Stroke w={20} h={21} d="M10 0V13M4.500 8L10 13.500L15.500 8M1.200 14V19H18.800V14" sw={2.300} />
            </ToolButton>
            <ToolButton $w={46}><Profile>S</Profile></ToolButton>
            <ToolButton $w={43.5}>
              <svg width="4" height="18" viewBox="0 0 4 18" fill="#c7c7c7">
                <circle cx="2" cy="2" r="1.900" />
                <circle cx="2" cy="9" r="1.900" />
                <circle cx="2" cy="16" r="1.900" />
              </svg>
            </ToolButton>
          </Toolbar>
        </ToolbarWrap>

        <Page>
          <Sidebar>
            <PanelTitle>Employee Panel</PanelTitle>
            <Menu>
              {menu.map(({ label, icon: Icon, iconWidth, active }) => (
                <MenuItem key={label} $active={active} $iconWidth={iconWidth}>
                  <Icon />
                  {label}
                </MenuItem>
              ))}
            </Menu>
          </Sidebar>
          <Main>
            <LogoutButton>Logout</LogoutButton>
            <Content>
              <Heading>Leave Requests</Heading>
              <FieldRow>
                <Field>
                  <FieldLabel>Reason</FieldLabel>
                  <ControlWrap>
                    <Select defaultValue="p">
                      <option value="p">Personal Reason</option>
                    </Select>
                    <ControlMark $right={4.5} $bottom={19}>
                      <Stroke w={12} h={8} d="M1.200 1.200L6 6L10.800 1.200" c="#333" sw={2.200} />
                    </ControlMark>
                  </ControlWrap>
                </Field>
                <Field>
                  <FieldLabel>Leave Count</FieldLabel>
                  <NumberInput placeholder="Enter number of days (1-20)" />
                </Field>
              </FieldRow>
              <Field>
                <FieldLabel>Additional Details</FieldLabel>
                <ControlWrap>
                  <Details placeholder="Please provide additional details about your reason..." />
                  <ControlMark $right={3} $bottom={2}>
                    <Stroke w={10} d="M.7 9.300L9.300 .7M5.500 9.500L9.500 5.500" c="#444" sw={1.200} />
                  </ControlMark>
                </ControlWrap>
              </Field>
              <AttachRow>
                <PlainButton $w={120} $iconWidth={14.6} $gap={4}><FaPaperclip />Attach Image</PlainButton>
              </AttachRow>
              <PreviewRow>
                <BrokenImage />
                <PreviewAlt>Preview</PreviewAlt>
                <PlainButton $w={134} $pl={1} $iconWidth={12.5} $gap={4.6}><FaXmark />Remove Image</PlainButton>
              </PreviewRow>
              <Actions>
                <CancelButton>Cancel</CancelButton>
                <SubmitButton>Submit Request</SubmitButton>
              </Actions>
            </Content>
          </Main>
        </Page>

        <Taskbar>
          <Weather>
            <WeatherCloud />
            <CountBadge>8</CountBadge>
          </Weather>
          <TaskSlot><WindowsLogo /></TaskSlot>
          <SearchPill>
            <svg width="20" height="20" viewBox="0 0 20 20" fill="none" stroke="#eef1f3" strokeWidth="2">
              <circle cx="9" cy="8.500" r="7" fill="#4b5a67" />
              <path d="M13.800 13.500L18.500 18.500" strokeWidth="2.400" />
            </svg>
            <span>Search</span>
            <FoodPlates />
          </SearchPill>
          {apps.map((a, i) => (
            <TaskSlot key={i} $running={a.running} $active={a.active}>
              {a.icon}
              {a.badge && <SlotBadge $color={a.badge}>{a.letter}</SlotBadge>}
            </TaskSlot>
          ))}
          <Tray>
            <TrayItem $w={40}><Stroke w={14} h={9} d="M1 8L7 2L13 8" c="#fff" sw={1.800} /></TrayItem>
            <TrayItem $w={40}>
              <svg width="20" height="14" viewBox="0 0 20 14">
                <path d="M4 7Q5 1 10 .5Q14 .5 16 5L10 9Z" fill="#9ca4aa" />
                <path d="M4 13.500A4 4 0 0 1 3 6Q6 4.500 9 7L15 5.200Q20 6 20 10Q19.500 13.500 16 13.500Z" fill="#fff" />
              </svg>
            </TrayItem>
            <TrayText $w={56} $ls={-0.2}>{"ENG\nIN"}</TrayText>
            <TrayItem $w={38}><Wifi /></TrayItem>
            <TrayItem $w={22}><Volume /></TrayItem>
            <TrayItem $w={38}><Battery /></TrayItem>
            <TrayText $w={89} $align="right" $ls={-0.05}>{"02:50\n20-06-2025"}</TrayText>
            <TrayItem $w={39}><Bell /></TrayItem>
            <TrayItem $w={15} />
          </Tray>
        </Taskbar>
      </Screen>
    </>
  );
}
